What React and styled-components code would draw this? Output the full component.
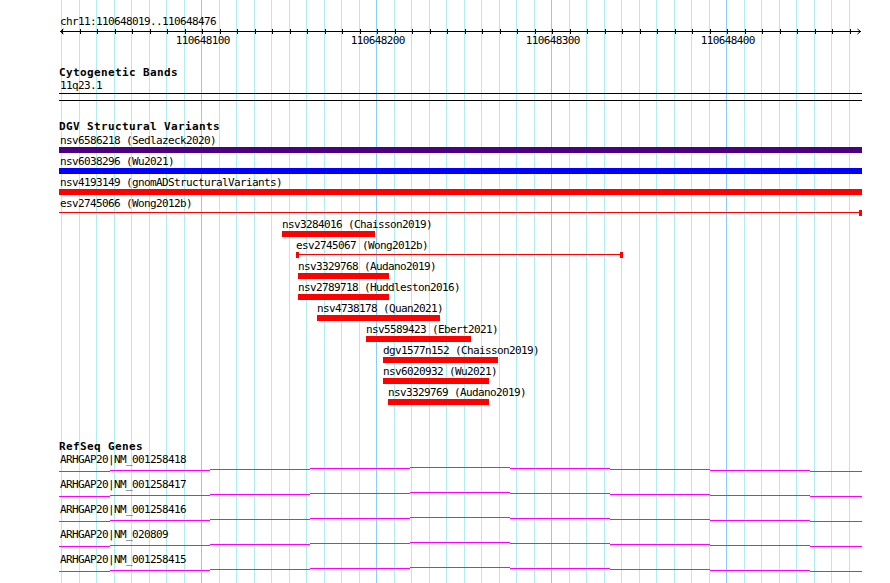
import React from 'react';
import styled, { createGlobalStyle } from 'styled-components';

const GlobalStyle = createGlobalStyle`
  html, body {
    margin: 0;
    padding: 0;
    background: #fff;
  }
`;

// genome -> pixel mapping of the browser image
const START = 110648019;
const END = 110648476;
const gridX = (p) => Math.floor(59.75 + (p - START) * 1.75);
const STEPS = [];
for (let p = 110648020; p <= END; p += 10) STEPS.push(p);

const variants = [
  { name: 'nsv6586218', src: 'Sedlazeck2020', x: 59, w: 803, lx: 60, color: '#4b0082' },
  { name: 'nsv6038296', src: 'Wu2021', x: 59, w: 803, lx: 60, color: '#0000ff' },
  { name: 'nsv4193149', src: 'gnomADStructuralVariants', x: 59, w: 803, lx: 60, color: '#ff0000' },
  { name: 'esv2745066', src: 'Wong2012b', x: 59, w: 803, lx: 60, thin: true, capEnd: true },
  { name: 'nsv3284016', src: 'Chaisson2019', x: 282, w: 93, color: '#ff0000' },
  { name: 'esv2745067', src: 'Wong2012b', x: 296, w: 327, thin: true, capStart: true, capEnd: true },
  { name: 'nsv3329768', src: 'Audano2019', x: 298, w: 91, color: '#ff0000' },
  { name: 'nsv2789718', src: 'Huddleston2016', x: 298, w: 91, color: '#ff0000' },
  { name: 'nsv4738178', src: 'Quan2021', x: 317, w: 123, color: '#ff0000' },
  { name: 'nsv5589423', src: 'Ebert2021', x: 366, w: 105, color: '#ff0000' },
  { name: 'dgv1577n152', src: 'Chaisson2019', x: 383, w: 115, color: '#ff0000' },
  { name: 'nsv6020932', src: 'Wu2021', x: 383, w: 106, color: '#ff0000' },
  { name: 'nsv3329769', src: 'Audano2019', x: 388, w: 101, color: '#ff0000' },
];

const genes = ['NM_001258418', 'NM_001258417', 'NM_001258416', 'NM_020809', 'NM_001258415'];

// intron hat, drawn as the stepped line the browser produces
const hat = [
  [59, 110, 5], [110, 210, 4], [210, 310, 3], [310, 410, 2], [410, 510, 1],
  [510, 610, 2], [610, 710, 3], [710, 810, 4], [810, 862, 5],
];

const Panel = styled.div`
  position: relative;
  width: 890px;
  height: 583px;
  overflow: hidden;
  background: #fff;
  color: #000;
  font-family: "DejaVu Sans Mono", "Liberation Mono", monospace;
`;

const GridLayer = styled.svg`
  position: absolute;
  left: 0;
  top: 0;
  width: 890px;
  height: 583px;
`;

const Content = styled.div`
  position: relative;
  display: flex;
  flex-direction: column;
  align-items: flex-start;
  padding-top: 16px;
`;

const Text = styled.div`
  font-size: 11px;
  letter-spacing: -0.62px;
  line-height: 12px;
  height: 12px;
  white-space: nowrap;
  margin-left: ${(p) => p.$x ?? 60}px;
  margin-top: ${(p) => p.$top ?? 0}px;
`;

const TrackTitle = styled.div`
  font-size: 11px;
  font-weight: bold;
  letter-spacing: 0.38px;
  line-height: 12px;
  height: 12px;
  white-space: nowrap;
  margin-left: 59px;
  margin-top: ${(p) => p.$top}px;
`;

const RulerSvg = styled.svg`
  display: block;
  width: 890px;
  height: 18px;
  font-family: "DejaVu Sans Mono", "Liberation Mono", monospace;
  font-size: 11px;
  letter-spacing: -0.62px;
`;

const Band = styled.div`
  box-sizing: border-box;
  width: 803px;
  height: 8px;
  margin: 1px 0 0 59px;
  border-top: 1px solid #000;
  border-bottom: 1px solid #000;
`;

const VariantList = styled.div`
  display: flex;
  flex-direction: column;
  margin-top: 2px;
`;

const FeatureRow = styled.div`
  display: flex;
  flex-direction: column;
  align-items: flex-start;
  height: 21px;
`;

const Bar = styled.div`
  height: 6px;
  background: ${(p) => p.$color};
`;

const Span = styled.div`
  box-sizing: border-box;
  height: 6px;
  background: linear-gradient(#f00, #f00) 0 2px / 100% 1px no-repeat;
  border-left: ${(p) => (p.$capStart ? '3px solid #f00' : '0')};
  border-right: ${(p) => (p.$capEnd ? '3px solid #f00' : '0')};
`;

const GeneList = styled.div`
  display: flex;
  flex-direction: column;
  margin-top: 1px;
`;

const GeneRow = styled.div`
  display: flex;
  flex-direction: column;
  height: 25px;
`;

const GeneSvg = styled.svg`
  display: block;
  width: 890px;
  height: 13px;
`;

function Grid() {
  return (
    <GridLayer viewBox="0 0 890 583" shapeRendering="crispEdges">
      {STEPS.map((p) => (
        <rect
          key={p}
          x={gridX(p)}
          y={0}
          width={1}
          height={583}
          fill={(p - 110648000) % 100 === 0 ? '#87cefa' : '#afeeee'}
        />
      ))}
    </GridLayer>
  );
}

function Ruler() {
  return (
    <RulerSvg viewBox="0 0 890 18">
      <g shapeRendering="crispEdges" fill="#000">
        <rect x={60} y={3} width={801} height={1} />
        {STEPS.map((p) => (
          <rect key={p} x={gridX(p) + 1} y={1} width={1} height={5} />
        ))}
      </g>
      <polyline points="63.5,1 60.5,3.5 63.5,6" fill="none" stroke="#000" strokeWidth="1" />
      <polyline points="857.5,1 860.5,3.5 857.5,6" fill="none" stroke="#000" strokeWidth="1" />
      {STEPS.filter((p) => (p - 110648000) % 100 === 0).map((p) => (
        <text key={p} x={gridX(p) + 1.8} y={15.5} textAnchor="middle" fill="#000">
          {p}
        </text>
      ))}
    </RulerSvg>
  );
}

function Variant({ v }) {
  return (
    <FeatureRow>
      <Text $x={v.lx ?? v.x}>{v.name} ({v.src})</Text>
      {v.thin ? (
        <Span $capStart={v.capStart} $capEnd={v.capEnd} style={{ marginLeft: v.x, width: v.w }} />
      ) : (
        <Bar $color={v.color} style={{ marginLeft: v.x, width: v.w }} />
      )}
    </FeatureRow>
  );
}

function Gene({ id }) {
  return (
    <GeneRow>
      <Text>ARHGAP20|{id}</Text>
      <GeneSvg viewBox="0 0 890 13" shapeRendering="crispEdges">
        {hat.map(([a, b, y]) => (
          <rect key={a} x={a} y={y} width={b - a} height={1} fill="#ff00ff" />
        ))}
      </GeneSvg>
    </GeneRow>
  );
}

export default function App() {
  return (
    <>
      <GlobalStyle />
      <Panel>
        <Grid />
        <Content>
          <Text>chr11:{START}..{END}</Text>
          <Ruler />

          <TrackTitle $top={21}>Cytogenetic Bands</TrackTitle>
          <Text $top={1}>11q23.1</Text>
          <Band />

          <TrackTitle $top={20}>DGV Structural Variants</TrackTitle>
          <VariantList>
            {variants.map((v) => (
              <Variant key={v.name} v={v} />
            ))}
          </VariantList>

          <TrackTitle $top={33}>RefSeq Genes</TrackTitle>
          <GeneList>
            {genes.map((id) => (
              <Gene key={id} id={id} />
            ))}
          </GeneList>
        </Content>
      </Panel>
    </>
  );
}
